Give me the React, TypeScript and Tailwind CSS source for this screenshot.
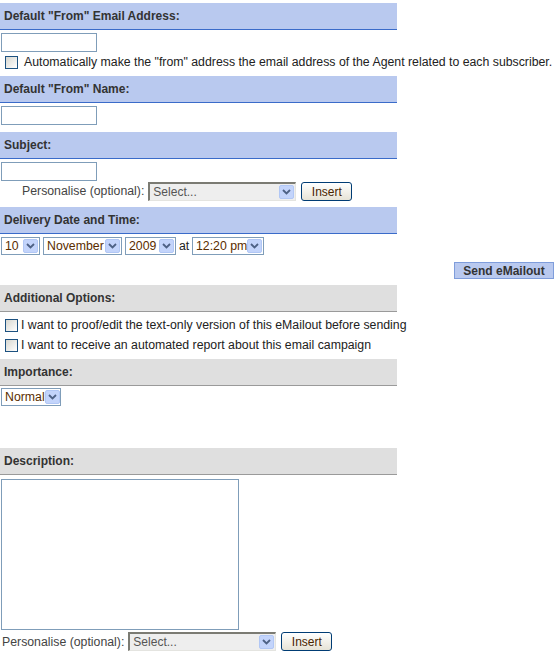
import { ReactNode } from 'react'

const font = { fontFamily: '"Liberation Sans", Arial, sans-serif' }

function Header({ children, gray = false, top }: { children: ReactNode; gray?: boolean; top: string }) {
  return (
    <div
      className={`${top} w-[397px] h-[27px] flex items-center pl-[4px] text-[12px] font-bold text-[#333] ${
        gray ? 'bg-[#dfdfdf] border-b border-[#9a9a9a]' : 'bg-[#b9c9ef] border-b border-[#3a6bc9]'
      }`}
    >
      {children}
    </div>
  )
}

function Arrow() {
  return (
    <span className="w-[15px] h-[14px] shrink-0 flex items-center justify-center bg-[#c3d4fb] border border-[#b1c7f5] rounded-[2px]">
      <svg width="9" height="6" viewBox="0 0 9 6">
        <path d="M1 1 L4.5 4.5 L8 1" stroke="#4d6185" strokeWidth="1.8" fill="none" />
      </svg>
    </span>
  )
}

function Select({ value, w }: { value: string; w: string }) {
  return (
    <div className={`${w} h-[18px] shrink-0 border border-[#7f9db9] bg-white flex items-center justify-between pl-[3px] pr-[1px] text-[12.3px] text-[#5a2d00] whitespace-nowrap`}>
      <span>{value}</span>
      <Arrow />
    </div>
  )
}

function GraySelect({ w }: { w: string }) {
  return (
    <div className={`${w} h-[19px] border-t-2 border-l-2 border-t-[#7b7b73] border-l-[#7b7b73] border-r border-b border-r-[#e4e4e0] border-b-[#e4e4e0] bg-[#eeeeee] flex items-center justify-between pl-[3px] pr-[1px] text-[12px] text-[#555]`}>
      <span>Select...</span>
      <Arrow />
    </div>
  )
}

function InsertButton() {
  return (
    <button className="w-[51px] h-[19px] rounded-[3px] border border-[#003c74] bg-gradient-to-b from-white to-[#e6e3d6] text-[12px] text-[#4a2400] flex items-center justify-center">
      Insert
    </button>
  )
}

function Checkbox() {
  return <span className="w-[13px] h-[13px] shrink-0 border border-[#1c5180] bg-gradient-to-br from-[#d7d7d0] to-white" />
}

function TextInput({ top }: { top: string }) {
  return <div className={`${top} w-[96px] h-[19px] ml-[1px] border border-[#7f9db9] bg-white`} />
}

export default function App() {
  return (
    <div className="w-[558px] min-h-[656px] bg-white text-[12.3px] text-[#222] pt-[3px]" style={font}>
      <Header top="">Default "From" Email Address:</Header>
      <TextInput top="mt-[3px]" />
      <div className="mt-[3px] flex items-center gap-[6px] pl-[5px] h-[15px] whitespace-nowrap">
        <Checkbox />
        <span>Automatically make the "from" address the email address of the Agent related to each subscriber.</span>
      </div>

      <Header top="mt-[6px]">Default "From" Name:</Header>
      <TextInput top="mt-[3px]" />

      <Header top="mt-[7px]">Subject:</Header>
      <TextInput top="mt-[3px]" />
      <div className="flex items-center mt-[1px] pl-[22px]">
        <span className="text-[#444] mr-[4px]">Personalise (optional):</span>
        <GraySelect w="w-[148px]" />
        <span className="ml-[5px]"><InsertButton /></span>
      </div>

      <Header top="mt-[6px]">Delivery Date and Time:</Header>
      <div className="flex items-center mt-[3px] pl-[1px] gap-[3px]">
        <Select value="10" w="w-[39px]" />
        <Select value="November" w="w-[79px]" />
        <Select value="2009" w="w-[51px]" />
        <span className="text-[#222] w-[10px]">at</span>
        <Select value="12:20 pm" w="w-[72px]" />
      </div>
      <div className="flex justify-end w-[554px] mt-[7px]">
        <button className="w-[100px] h-[17px] bg-[#b9c9ef] border border-[#7f9ddb] text-[12px] font-bold text-[#333] flex items-center justify-center">
          Send eMailout
        </button>
      </div>

      <Header top="mt-[6px]" gray>Additional Options:</Header>
      <div className="mt-[5px] flex items-center gap-[3px] pl-[5px] h-[16px] whitespace-nowrap">
        <Checkbox />
        <span>I want to proof/edit the text-only version of this eMailout before sending</span>
      </div>
      <div className="mt-[4px] flex items-center gap-[3px] pl-[5px] h-[16px] whitespace-nowrap">
        <Checkbox />
        <span>I want to receive an automated report about this email campaign</span>
      </div>

      <Header top="mt-[6px]" gray>Importance:</Header>
      <div className="mt-[2px] pl-[1px]">
        <Select value="Normal" w="w-[60px]" />
      </div>

      <Header top="mt-[42px]" gray>Description:</Header>
      <div className="mt-[4px] ml-[1px] w-[238px] h-[151px] border border-[#7f9db9] bg-white" />
      <div className="flex items-center mt-[2px] pl-[2px]">
        <span className="text-[#444] mr-[4px]">Personalise (optional):</span>
        <GraySelect w="w-[148px]" />
        <span className="ml-[5px]"><InsertButton /></span>
      </div>
    </div>
  )
}
